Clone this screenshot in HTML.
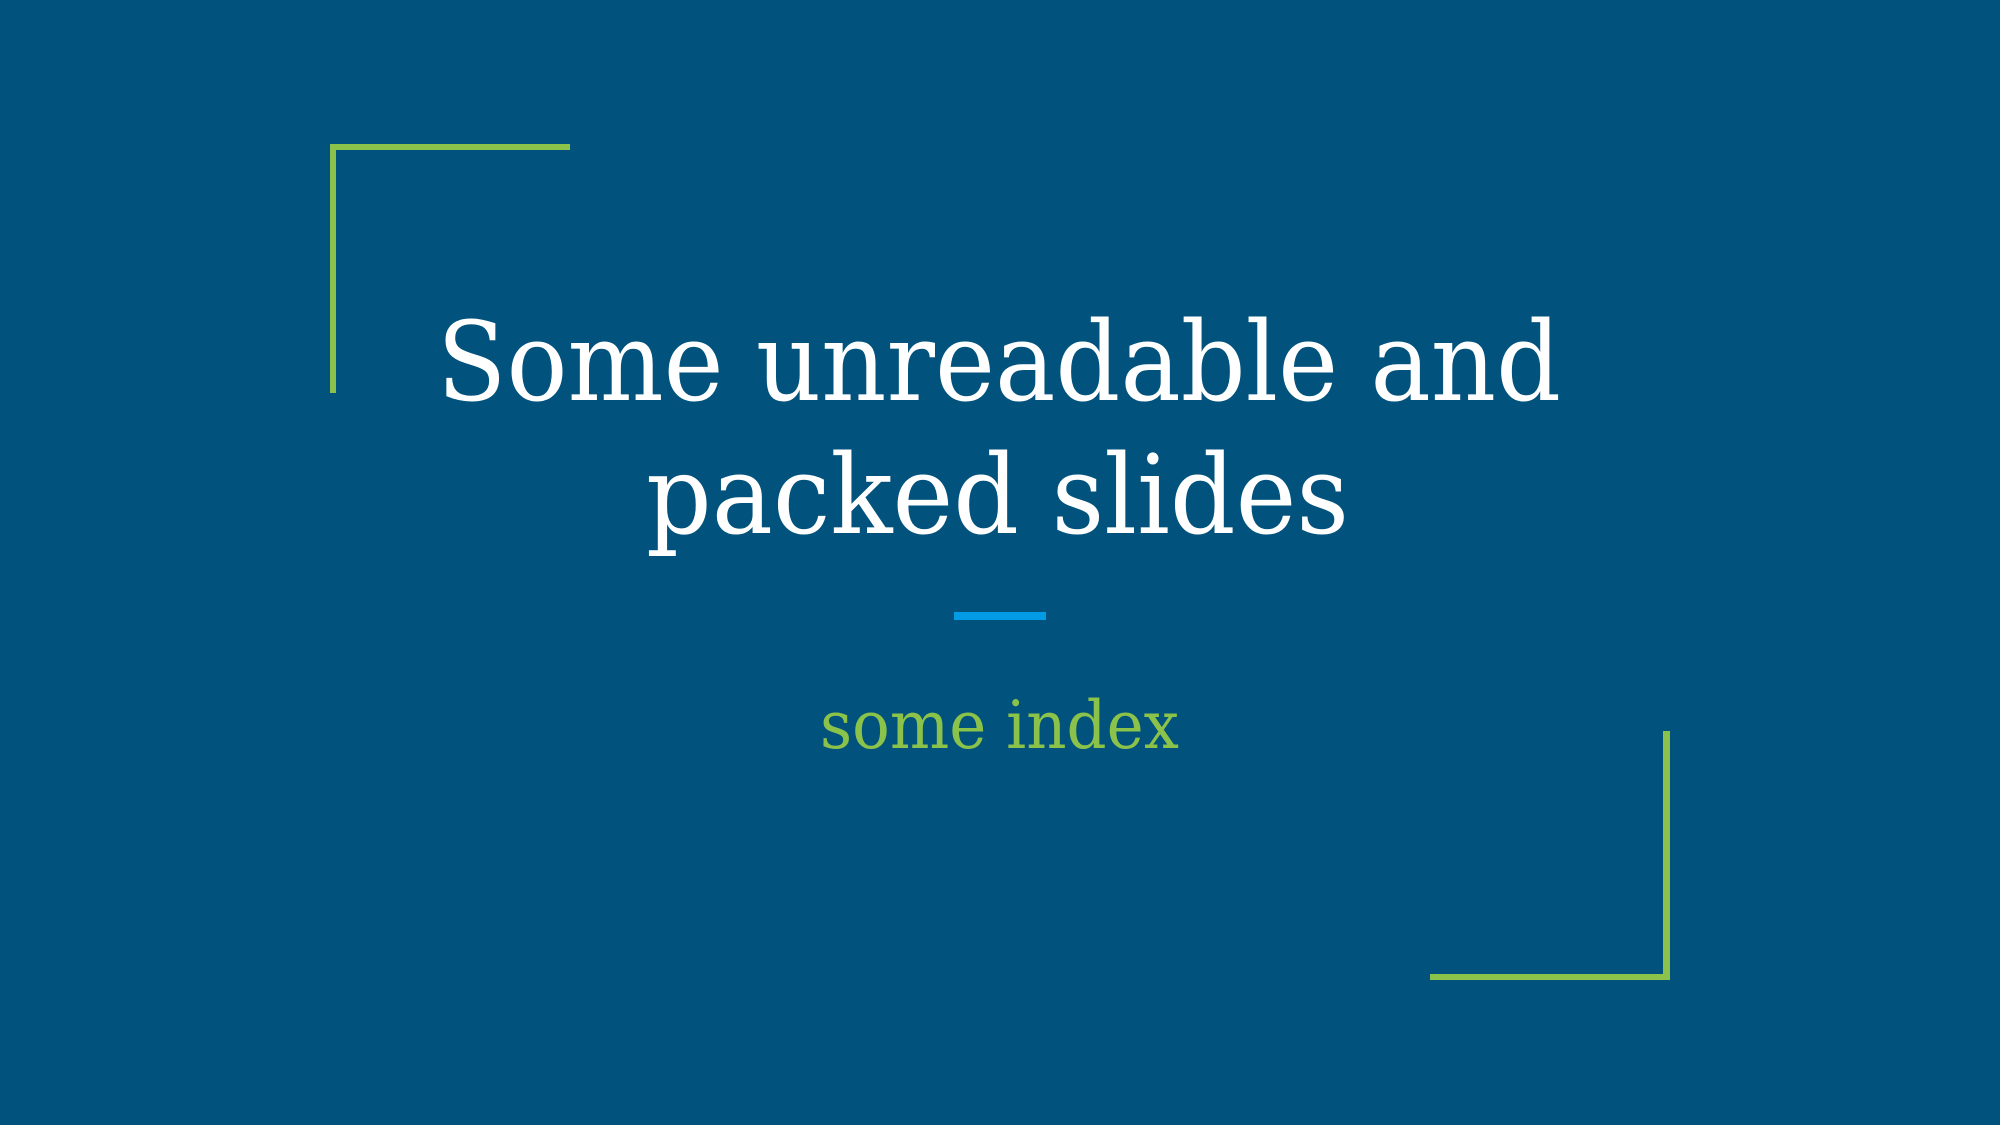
<!DOCTYPE html>
<html><head><meta charset="utf-8"><style>
html,body{margin:0;padding:0;}
body{width:2000px;height:1125px;background:#01527c;overflow:hidden;position:relative;}
.g{position:absolute;background:#8bc34a;}
svg{position:absolute;left:0;top:0;}
</style></head><body>
<div class="g" style="left:330px;top:144px;width:240px;height:6px"></div>
<div class="g" style="left:330px;top:144px;width:6px;height:249px"></div>
<div class="g" style="left:1663px;top:731px;width:7px;height:249px"></div>
<div class="g" style="left:1430px;top:974px;width:240px;height:6px"></div>
<div style="position:absolute;left:954px;top:612px;width:92px;height:8px;background:#039be5"></div>
<svg width="2000" height="1125" xmlns="http://www.w3.org/2000/svg">
<g font-family="DejaVu Serif, serif" fill="#ffffff" font-size="110">
<text x="437" y="400" textLength="1124" lengthAdjust="spacingAndGlyphs">Some unreadable and</text>
<text x="646" y="533" textLength="703" lengthAdjust="spacingAndGlyphs">packed slides</text>
</g>
<text x="820" y="748" font-family="DejaVu Serif, serif" font-size="66" fill="#8bc34a" textLength="359" lengthAdjust="spacingAndGlyphs">some index</text>
</svg>
</body></html>
